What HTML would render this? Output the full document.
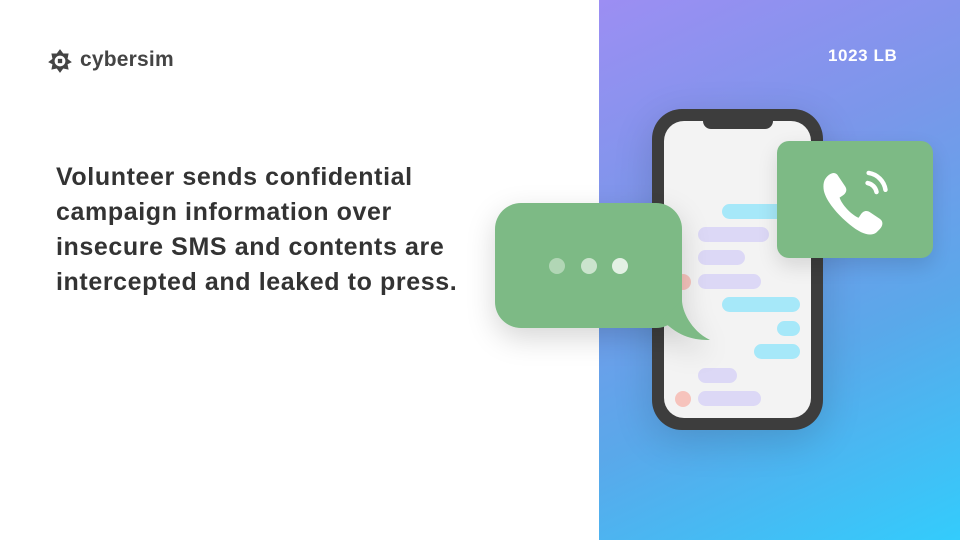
<!DOCTYPE html><html><head><style>
body{margin:0;width:960px;height:540px;overflow:hidden;background:#fff;font-family:"Liberation Sans",sans-serif;position:relative}
.panel{position:absolute;left:599px;top:0;width:361px;height:540px;background:linear-gradient(155deg,#9c8ef3 0%,#7a97ea 35%,#5aa8ea 65%,#33ccfc 100%)}
.a{position:absolute}
.txt{left:56px;top:160px;font-size:25px;font-weight:bold;color:#333;line-height:35px;letter-spacing:.6px}
.b{position:absolute;height:15px;border-radius:8px}
.p{background:#dcd8f6}.c{background:#a6e8f9}
</style></head><body>
<div class="panel"></div>
<div class="a" style="left:46px;top:47px;width:28px;height:28px">
<svg width="28" height="28" viewBox="0 0 26 26"><path d="M13 2l3 4h5l-1 5 4 3-4 2 1 5-5-1-3 4-3-4-5 1 1-5-4-2 4-3-1-5h5z" fill="#444"/><circle cx="13" cy="13" r="5" fill="#fff"/><path d="M11 11h4v4h-4z" fill="#444"/></svg></div>
<div class="a" style="left:80px;top:48px;font-size:21px;font-weight:bold;color:#444;letter-spacing:.2px">cybersim</div>
<div class="a" style="left:828px;top:46px;font-size:17px;font-weight:bold;color:#fff;letter-spacing:.6px">1023 LB</div>
<div class="a txt">Volunteer sends confidential<br>campaign information over<br>insecure SMS and contents are<br>intercepted and leaked to press.</div>
<div class="a" style="left:652px;top:109px;width:147px;height:297px;background:#3d3d3d;border-radius:30px;padding:12px;box-shadow:0 10px 40px rgba(0,0,0,.15)">
<div style="width:147px;height:297px;background:#f3f3f3;border-radius:20px"></div></div>
<div class="a" style="left:703px;top:119px;width:70px;height:10px;background:#3d3d3d;border-radius:0 0 8px 8px"></div>
<div class="b c" style="left:722px;top:204px;width:70px"></div>
<div class="b p" style="left:698px;top:227px;width:71px"></div>
<div class="b p" style="left:698px;top:250px;width:47px"></div>
<div class="b p" style="left:698px;top:274px;width:63px"></div>
<div class="b" style="left:675px;top:274px;width:16px;height:16px;background:#f6c3bc;border-radius:50%"></div>
<div class="b c" style="left:722px;top:297px;width:78px"></div>
<div class="b c" style="left:777px;top:321px;width:23px"></div>
<div class="b c" style="left:754px;top:344px;width:46px"></div>
<div class="b p" style="left:698px;top:368px;width:39px"></div>
<div class="b p" style="left:698px;top:391px;width:63px"></div>
<div class="b" style="left:675px;top:391px;width:16px;height:16px;background:#f6c3bc;border-radius:50%"></div>
<svg class="a" style="left:460px;top:170px" width="280" height="210" viewBox="460 170 280 210"><defs><filter id="s" x="-30%" y="-30%" width="160%" height="160%"><feDropShadow dx="0" dy="10" stdDeviation="14" flood-opacity=".16"/></filter></defs>
<g filter="url(#s)"><rect x="495" y="203" width="187" height="125" rx="26" fill="#7dba85"/><path d="M662 320 C680 338 695 340 710 340 C690 330 682 310 682 300Z" fill="#7dba85"/></g>
<circle cx="557" cy="266" r="8" fill="#b1d6b5"/><circle cx="589" cy="266" r="8" fill="#cbe4cd"/><circle cx="620" cy="266" r="8" fill="#e3f1e4"/></svg>
<div class="a" style="left:777px;top:141px;width:156px;height:117px;background:#7dba85;border-radius:12px;box-shadow:0 8px 20px rgba(0,0,0,.12)">
<svg width="156" height="117" viewBox="0 0 156 117"><g transform="translate(-8,-5) scale(1.12)"><path d="M52 36c4-4 8-4 10 0l6 9c2 3 1 6-2 8l-3 2c2 6 10 15 17 18l2-3c2-3 5-4 8-2l9 6c3 2 3 6 0 9l-3 3c-5 4-13 2-24-7-11-9-21-21-23-30-1-6 0-10 3-13z" fill="#fff"/><path d="M88 42a10 10 0 0 1 8 8M89 33a18 18 0 0 1 15 15" stroke="#fff" stroke-width="4" fill="none" stroke-linecap="round"/></g></svg></div>
</body></html>
